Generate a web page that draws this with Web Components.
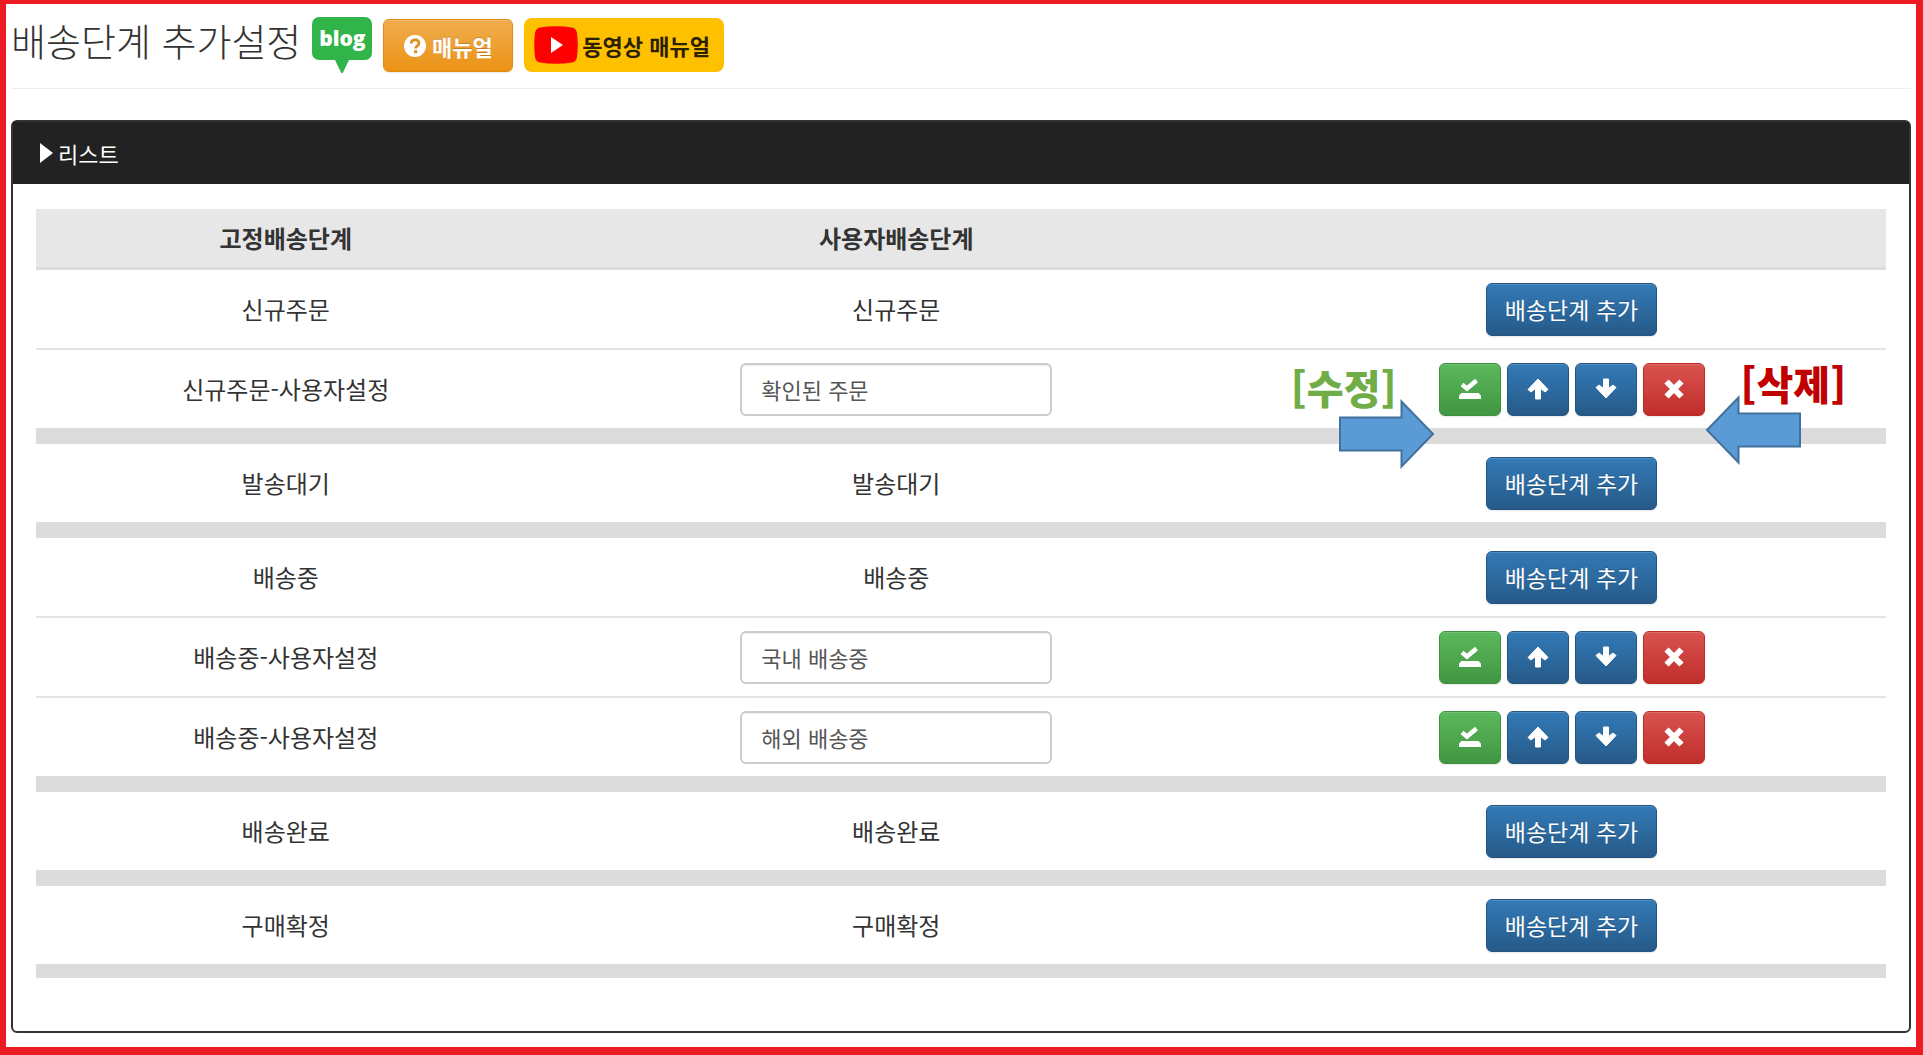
<!DOCTYPE html>
<html lang="ko">
<head>
<meta charset="utf-8">
<title>배송단계 추가설정</title>
<style>
  html {
    height: 100%;
  }
  body {
    margin: 0;
    min-height: 100%;
    box-sizing: border-box;
    border: solid #ed1c24;
    border-width: 4px 7px 8px 6px;
    padding: 0 5px 14px;
    background: #fff;
    color: #333;
    font-family: "Noto Sans CJK KR", "Noto Sans", sans-serif;
    font-size: 24px;
    line-height: 32px;
  }
</style>
</head>
<body>

<page-header>
  배송단계 추가설정
  <blog-link slot="links">blog</blog-link>
  <manual-link slot="links">매뉴얼</manual-link>
  <video-link slot="links">동영상 매뉴얼</video-link>
</page-header>

<list-panel>
  <span slot="title">리스트</span>
  <stage-table></stage-table>
</list-panel>

<script>
class PageHeader extends HTMLElement {
  constructor() {
    super();
    const el = this.attachShadow({ mode: 'open' });
    el.innerHTML = `
      <style>
        :host {
          display: block;
          margin-bottom: 31px;
          border-bottom: 1px solid #eee;
        }
        header {
          display: flex;
          align-items: flex-start;
          gap: 11px;
          padding: 13px 0 15px;
        }
        h1 {
          margin: 0;
          font-size: 38px;
          font-weight: 300;
          line-height: 46px;
        }
        .links {
          display: flex;
          gap: 11px;
        }
      </style>
      <header>
        <h1><slot></slot></h1>
        <div class="links"><slot name="links"></slot></div>
      </header>
    `;
  }
}
customElements.define('page-header', PageHeader);

class BlogLink extends HTMLElement {
  constructor() {
    super();
    const el = this.attachShadow({ mode: 'open' });
    el.innerHTML = `
      <style>
        :host { display: block; }
        a {
          display: block;
          color: #fff;
          text-decoration: none;
          text-align: center;
          font: 800 21px/42px "Open Sans", sans-serif;
        }
        .box {
          display: block;
          width: 60px;
          height: 43px;
          border-radius: 7px;
          background: #31b44a;
        }
        svg {
          display: block;
          margin: 0 auto;
        }
      </style>
      <a href="#"><span class="box"><slot></slot></span>
        <svg width="14" height="13" viewBox="0 0 14 13"><path d="M0 0H14L8 12.5Q7 14 6 12.5Z" fill="#31b44a"/></svg>
      </a>
    `;
  }
}
customElements.define('blog-link', BlogLink);

class ManualLink extends HTMLElement {
  constructor() {
    super();
    const el = this.attachShadow({ mode: 'open' });
    el.innerHTML = `
      <style>
        :host { display: block; padding-top: 2px; }
        a {
          display: flex;
          align-items: center;
          justify-content: center;
          gap: 6px;
          box-sizing: border-box;
          width: 130px;
          height: 53px;
          border: 1px solid #e38d13;
          border-radius: 6px;
          background: linear-gradient(#f0ad4e, #eb9316);
          box-shadow: inset 0 1px 0 rgba(255,255,255,.15), 0 1px 2px rgba(0,0,0,.1);
          color: #fff;
          font-size: 22px;
          font-weight: 700;
          text-decoration: none;
          text-shadow: 0 -1px 0 rgba(0,0,0,.2);
        }
      </style>
      <a href="#">
        <svg width="22" height="22" viewBox="0 0 22 22">
          <circle cx="11" cy="11" r="11" fill="#fff"/>
          <path d="M7.2 8.4C7.2 3.6 15 3.6 15 8.2C15 11 11.6 10.8 11.6 13.6" fill="none" stroke="#dc8f25" stroke-width="2.8"/>
          <rect x="10" y="15.2" width="3.2" height="3" fill="#dc8f25"/>
        </svg>
        <slot></slot>
      </a>
    `;
  }
}
customElements.define('manual-link', ManualLink);

class VideoLink extends HTMLElement {
  constructor() {
    super();
    const el = this.attachShadow({ mode: 'open' });
    el.innerHTML = `
      <style>
        :host { display: block; padding-top: 1px; }
        a {
          display: flex;
          align-items: center;
          gap: 4px;
          box-sizing: border-box;
          width: 200px;
          height: 54px;
          padding-left: 10px;
          border-radius: 8px;
          background: #ffc000;
          color: #2b2000;
          font-size: 22px;
          font-weight: 700;
          text-decoration: none;
          white-space: nowrap;
        }
      </style>
      <a href="#">
        <svg width="44" height="38" viewBox="0 0 44 38">
          <path d="M6 1.5Q22-1 38 1.5Q42 2 43 7Q44.500 19 43 31Q42 36 38 36.500Q22 39 6 36.500Q2 36 1 31Q-.5 19 1 7Q2 2 6 1.500Z" fill="#f00"/>
          <path d="M17 11L29 19L17 27Z" fill="#fff"/>
        </svg>
        <slot></slot>
      </a>
    `;
  }
}
customElements.define('video-link', VideoLink);

class ListPanel extends HTMLElement {
  constructor() {
    super();
    const el = this.attachShadow({ mode: 'open' });
    el.innerHTML = `
      <style>
        :host {
          display: block;
          border: 2px solid #333;
          border-radius: 6px;
        }
        .heading {
          display: flex;
          align-items: center;
          gap: 5px;
          height: 62px;
          padding-left: 27px;
          background: #222;
          color: #fff;
          font-size: 22px;
        }
        .body {
          padding: 25px 23px 53px;
        }
      </style>
      <div class="heading">
        <svg width="13" height="20" viewBox="0 0 13 20"><path d="M0 0L13 10L0 20Z" fill="#fff"/></svg>
        <slot name="title"></slot>
      </div>
      <div class="body"><slot></slot></div>
    `;
  }
}
customElements.define('list-panel', ListPanel);

const ICONS = {
  save: '<path d="M3 6.500L8 10.500L17.500 2.500" fill="none" stroke="#fff" stroke-width="4.500"/><path d="M0 21V17.500L2.500 15H19.500L22 17.500V21Z" fill="#fff"/>',
  up: '<path d="M11 1L21 11.500L18 14L13.500 10.500V21H8.500V10.500L4 14L1 11.500Z" fill="#fff" stroke="#fff" stroke-linejoin="round"/>',
  down: '<path d="M11 20L21 9.500L18 7L13.500 10.500V1H8.500V10.500L4 7L1 9.500Z" fill="#fff" stroke="#fff" stroke-linejoin="round"/>',
  remove: '<path d="M3.500 3.500L18.500 18.500M18.500 3.500L3.500 18.500" fill="none" stroke="#fff" stroke-width="6"/>'
};

class StageButton extends HTMLElement {
  constructor() {
    super();
    const el = this.attachShadow({ mode: 'open' });
    const icon = this.getAttribute('icon');
    const label = this.getAttribute('label');
    el.innerHTML = `
      <style>
        :host {
          display: inline-block;
          --top: #337ab7;
          --bottom: #265a88;
          --edge: #245580;
        }
        :host([icon=save]) { --top: #5cb85c; --bottom: #419641; --edge: #3e8f3e; }
        :host([icon=remove]) { --top: #d9534f; --bottom: #c12e2a; --edge: #b92c28; }
        button {
          display: flex;
          align-items: center;
          justify-content: center;
          box-sizing: border-box;
          height: 53px;
          padding: 0 18px;
          border: 1px solid var(--edge);
          border-radius: 6px;
          background: linear-gradient(var(--top), var(--bottom));
          box-shadow: inset 0 1px 0 rgba(255,255,255,.15), 0 1px 2px rgba(0,0,0,.1);
          color: #fff;
          font: inherit;
          font-size: 23px;
          text-shadow: 0 -1px 0 rgba(0,0,0,.2);
        }
        svg {
          display: block;
          margin: 0 1px;
        }
      </style>
      <button type="button" ${icon ? `aria-label="${label}"` : ''}>
        ${icon ? `<svg width="22" height="22" viewBox="0 0 22 22">${ICONS[icon]}</svg>` : '<slot></slot>'}
      </button>
    `;
  }
}
customElements.define('stage-button', StageButton);

// label with a block arrow, sits beside the button it points at
class ArrowNote extends HTMLElement {
  constructor() {
    super();
    const el = this.attachShadow({ mode: 'open' });
    el.innerHTML = `
      <style>
        :host {
          display: flex;
          flex-direction: column;
          position: absolute;
          z-index: 1;
          font-size: 40px;
          font-weight: 900;
          line-height: 40px;
          white-space: nowrap;
        }
        :host([to=right]) {
          right: calc(100% + 4px);
          top: 4px;
          align-items: flex-end;
          color: #70ad47;
        }
        :host([to=left]) {
          left: 100%;
          top: 0;
          color: #c00000;
        }
        :host([to=right]) span { margin-right: 38px; }
        :host([to=left]) span { margin-left: 36px; }
        svg { display: block; margin-top: -8px; }
        :host([to=left]) svg { transform: scaleX(-1); }
      </style>
      <span><slot></slot></span>
      <svg width="96" height="70" viewBox="0 0 96 70">
        <path d="M1 18.500H62.500V2.500L94 35L62.500 67.500V51.500H1Z" fill="#5b9bd5" stroke="#41719c" stroke-width="2"/>
      </svg>
    `;
  }
}
customElements.define('arrow-note', ArrowNote);

class StageActions extends HTMLElement {
  constructor() {
    super();
    const el = this.attachShadow({ mode: 'open' });
    el.innerHTML = `
      <style>
        :host {
          display: inline-flex;
          gap: 6px;
          position: relative;
          vertical-align: middle;
        }
      </style>
      <stage-button icon="save" label="수정"></stage-button>
      <stage-button icon="up" label="위로"></stage-button>
      <stage-button icon="down" label="아래로"></stage-button>
      <stage-button icon="remove" label="삭제"></stage-button>
      <slot></slot>
    `;
  }
}
customElements.define('stage-actions', StageActions);

const STAGES = [
  { name: '신규주문' },
  { name: '신규주문-사용자설정', value: '확인된 주문', notes: true, last: true },
  { name: '발송대기', last: true },
  { name: '배송중' },
  { name: '배송중-사용자설정', value: '국내 배송중' },
  { name: '배송중-사용자설정', value: '해외 배송중', last: true },
  { name: '배송완료', last: true },
  { name: '구매확정', last: true }
];

class StageTable extends HTMLElement {
  constructor() {
    super();
    const el = this.attachShadow({ mode: 'open' });
    const notes = '<arrow-note to="right">[수정]</arrow-note><arrow-note to="left">[삭제]</arrow-note>';
    const rows = STAGES.map((s, i) => `
      <tr class="${s.last ? 'last' : ''}">
        <td>${s.value ? `<label for="stage${i}">${s.name}</label>` : s.name}</td>
        <td>${s.value ? `<input id="stage${i}" type="text" value="${s.value}">` : s.name}</td>
        <td>${s.value
          ? `<stage-actions>${s.notes ? notes : ''}</stage-actions>`
          : '<stage-button>배송단계 추가</stage-button>'}</td>
      </tr>`).join('');

    el.innerHTML = `
      <style>
        :host { display: block; }
        table {
          width: 100%;
          table-layout: fixed;
          border-collapse: separate;
          border-spacing: 0;
          text-align: center;
        }
        th, td {
          box-sizing: border-box;
          padding: 0;
          vertical-align: middle;
        }
        th {
          height: 61px;
          border-bottom: 3px solid #dcdcdc;
          background: #e7e7e7;
          font-weight: 700;
        }
        th:nth-child(1) { width: 27%; }
        th:nth-child(2) { width: 39%; }
        td {
          height: 80px;
          border-bottom: 2px solid #e4e4e4;
        }
        .last td {
          height: 94px;
          border-bottom: 16px solid #dcdcdc;
        }
        tr:last-child td {
          height: 92px;
          border-bottom-width: 14px;
        }
        stage-button { vertical-align: middle; }
        input {
          box-sizing: border-box;
          width: 312px;
          height: 53px;
          padding: 0 19px;
          border: 2px solid #ccc;
          border-radius: 6px;
          box-shadow: inset 0 1px 1px rgba(0,0,0,.075);
          color: #555;
          font: inherit;
          font-size: 22px;
          vertical-align: middle;
        }
      </style>
      <table>
        <thead>
          <tr><th>고정배송단계</th><th>사용자배송단계</th><th></th></tr>
        </thead>
        <tbody>${rows}</tbody>
      </table>
    `;
  }
}
customElements.define('stage-table', StageTable);
</script>
</body>
</html>
